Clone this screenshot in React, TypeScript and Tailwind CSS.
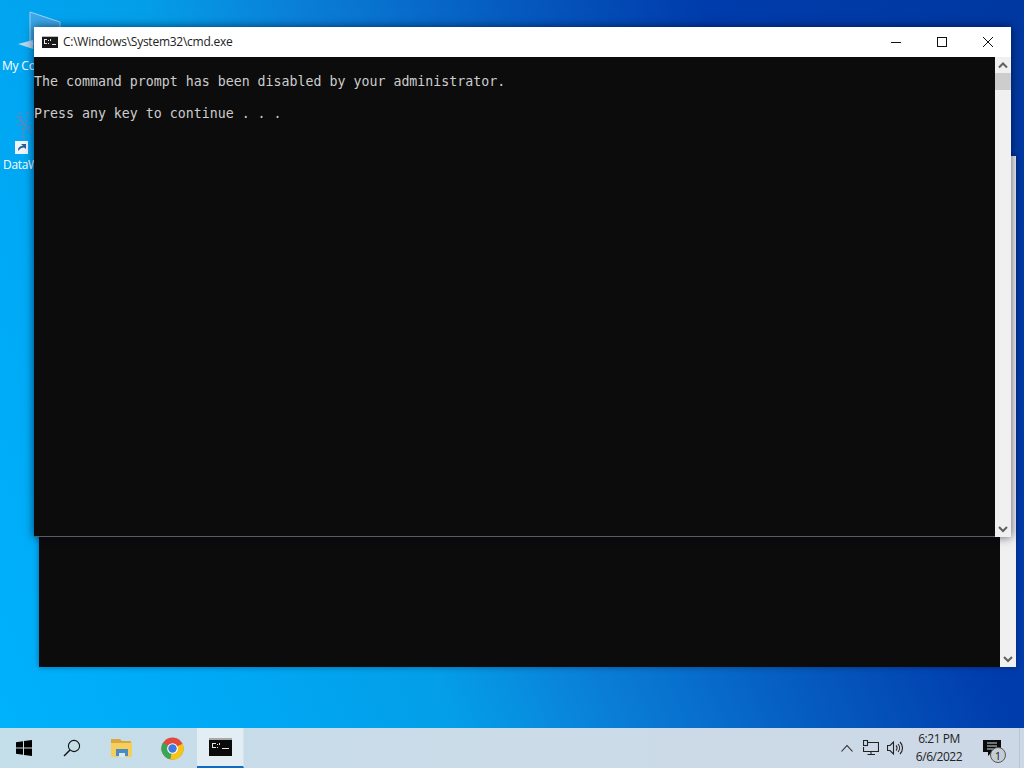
const mono = "font-['DejaVu_Sans_Mono',monospace] text-[13.28px] leading-[16px] text-[#cccccc] whitespace-pre";

function Chevron({ up }: { up?: boolean }) {
  return (
    <svg width="16" height="16" viewBox="0 0 16 16" fill="none" stroke="#606060" strokeWidth="2" className="shrink-0">
      <path d={up ? "M4 10.5 L8 6.5 L12 10.5" : "M4 6 L8 10 L12 6"} />
    </svg>
  );
}

function Desk() {
  return (
    <>
      <div className="absolute left-0 top-0 w-[70px] h-[80px]">
        <svg width="70" height="56" viewBox="0 0 70 56" className="absolute left-0 top-0">
          <path d="M30 12 L60 22 L60 44 L30 44 Z" fill="#3ba6e8" stroke="#9cd2f2" strokeWidth="1" />
          <path d="M18 44 L33 40 L33 49 Z" fill="#b4d8ee" />
        </svg>
        <span className="absolute left-[2px] top-[58px] text-white text-[12px] leading-[16px] whitespace-nowrap tracking-[-0.2px] font-['Open_Sans',sans-serif]">My Co</span>
      </div>
      <div className="absolute left-0 top-[106px] w-[70px] h-[70px]">
        <svg width="40" height="50" viewBox="0 0 40 50" className="absolute left-0 top-0">
          <path d="M20 6 L24 32 M28 6 L22 32 M17 18 L33 22 M17 10 L33 28" stroke="#b0708c" strokeWidth="2" strokeDasharray="2 2" opacity="0.55" />
          <rect x="15" y="35" width="13" height="13" fill="#eef4f8" />
          <path d="M18 45 C18 41 20 40 23 40 L21 38 L26 38 L26 43 L24 41.5 C22 41.5 20 42.5 18 45 Z" fill="#2a5f98" />
        </svg>
        <span className="absolute left-[3px] top-[51px] text-white text-[12px] leading-[16px] whitespace-nowrap tracking-[-0.3px] font-['Open_Sans',sans-serif]">DataW</span>
      </div>
    </>
  );
}

function BackWindow() {
  return (
    <div className="absolute left-[39px] top-[156px] w-[977px] h-[511px] flex shadow-[0_0_6px_rgba(0,0,40,0.4)]">
      <div className="flex-1 bg-[#0c0c0c]" />
      <div className="w-[16px] bg-[#f0f0f0] flex flex-col justify-end items-center">
        <Chevron />
      </div>
    </div>
  );
}

function FrontWindow() {
  return (
    <div className="absolute left-[34px] top-[27px] w-[977px] h-[510px] flex flex-col shadow-[0_0_9px_rgba(0,0,30,0.65)]">
      <div className="h-[30px] bg-white flex items-center shrink-0">
        <svg width="16" height="12" viewBox="0 0 16 12" className="ml-[8px] mr-[5px] shrink-0">
          <rect x="0" y="0" width="16" height="12" fill="#1a1a1a" />
          <rect x="0" y="0" width="16" height="1" fill="#bdbdbd" />
          <path d="M2 3 H5 V4 H3 V7 H5 V8 H2 Z M6 4 H7 V5 H6 Z M6 7 H7 V8 H6 Z M8 3 H9 V5 H8 Z M10 8 H14 V9 H10 Z" fill="#ececec" />
        </svg>
        <span className="text-[12px] leading-[16px] text-[#222] font-['Open_Sans',sans-serif] tracking-[-0.25px]">C:\Windows\System32\cmd.exe</span>
        <div className="ml-auto flex h-full items-center">
          <div className="w-[46px] h-full flex items-center justify-center">
            <svg width="12" height="12" viewBox="0 0 12 12" stroke="#111" fill="none"><path d="M1 6.5 H11" /></svg>
          </div>
          <div className="w-[46px] h-full flex items-center justify-center">
            <svg width="12" height="12" viewBox="0 0 12 12" stroke="#111" fill="none"><rect x="1.5" y="1.5" width="9" height="9" /></svg>
          </div>
          <div className="w-[46px] h-full flex items-center justify-center">
            <svg width="12" height="12" viewBox="0 0 12 12" stroke="#111" fill="none"><path d="M1 1 L11 11 M11 1 L1 11" /></svg>
          </div>
        </div>
      </div>
      <div className="flex-1 flex min-h-0">
        <div className={`flex-1 bg-[#0c0c0c] pt-[17px] border-b border-[#5c5c5c] ${mono}`}>
          {"The command prompt has been disabled by your administrator.\n\nPress any key to continue . . ."}
        </div>
        <div className="w-[16px] bg-[#f0f0f0] flex flex-col items-center">
          <Chevron up />
          <div className="w-[16px] h-[17px] bg-[#cdcdcd] shrink-0" />
          <div className="flex-1" />
          <Chevron />
        </div>
      </div>
    </div>
  );
}

function Taskbar() {
  return (
    <div className="absolute left-0 right-0 bottom-0 h-[40px] flex items-center bg-[linear-gradient(90deg,#c4deea_0%,#cbdbe8_50%,#cdd8e6_100%)]">
      <div className="w-[48px] h-full flex items-center justify-center">
        <svg width="16" height="16" viewBox="0 0 16 16" fill="#000">
          <path d="M0 2.3 L7 1.2 V7.4 H0 Z M8 1 L16 0 V7.4 H8 Z M0 8.5 H7 V14.8 L0 13.7 Z M8 8.5 H16 V16 L8 15 Z" />
        </svg>
      </div>
      <div className="w-[48px] h-full flex items-center justify-center">
        <svg width="18" height="18" viewBox="0 0 18 18" fill="none" stroke="#111" strokeWidth="1.1">
          <circle cx="11" cy="7" r="5.6" />
          <path d="M7 11 L1 17" strokeWidth="1.4" />
        </svg>
      </div>
      <div className="w-[52px] h-full flex items-center justify-center">
        <svg width="24" height="22" viewBox="0 0 24 22">
          <path d="M1 2 H10 L12 4 H21 V8 H1 Z" fill="#d9a73c" />
          <path d="M1 6 H22 V20 H1 Z" fill="#f6ce5c" />
          <path d="M6 12 H18 V19 H15 V16 H9 V19 H6 Z" fill="#4a8cc0" />
          <path d="M9 16 H15 V20 H9 Z" fill="#d9e6ee" />
        </svg>
      </div>
      <div className="w-[49px] h-full flex items-center justify-center">
        <svg width="23" height="23" viewBox="0 0 24 24">
          <circle cx="12" cy="12" r="11.5" fill="#e04a3a" />
          <path d="M12 12 L22.5 7 A11.5 11.5 0 0 1 9.5 23.2 Z" fill="#f5c518" />
          <path d="M12 12 L9.5 23.2 A11.5 11.5 0 0 1 2 6 Z" fill="#3aa655" />
          <circle cx="12" cy="12" r="5.6" fill="#fff" />
          <circle cx="12" cy="12" r="4.4" fill="#3f78e0" />
        </svg>
      </div>
      <div className="w-[47px] h-full flex items-center justify-center bg-[#e2edf4] border-b-2 border-[#0f6cc4] border-r border-r-[#d6e2ec]">
        <svg width="23" height="18" viewBox="0 0 23 18">
          <rect x="0" y="0" width="23" height="18" fill="#0b0b0b" />
          <rect x="0" y="0" width="23" height="2" fill="#a8a8a8" />
          <path d="M3 5 H7 V6 H4 V9 H7 V10 H3 Z M8 6 H9 V7 H8 Z M8 9 H9 V10 H8 Z M10 5 H11 V7 H10 Z M13 10 H20 V11 H13 Z" fill="#e4e4e4" />
        </svg>
      </div>
      <div className="ml-auto flex items-center h-full">
        <svg width="12" height="8" viewBox="0 0 12 8" fill="none" stroke="#222" strokeWidth="1.1" className="mr-[10px]">
          <path d="M0.5 7.5 L6 1.5 L11.5 7.5" />
        </svg>
        <svg width="16" height="16" viewBox="0 0 16 16" fill="none" stroke="#222" strokeWidth="1.1" className="mr-[8px]">
          <path d="M5 2.5 H15.5 V11.5 H0.5 V7" />
          <rect x="0.5" y="0.5" width="4" height="5" />
          <path d="M8 11.5 V14.5 M4.5 14.5 H12" />
        </svg>
        <svg width="16" height="14" viewBox="0 0 16 14" fill="none" stroke="#222" strokeWidth="1.1" className="mr-[3px]">
          <path d="M0.5 4.5 H3 L6.5 1 V13 L3 9.5 H0.5 Z" />
          <path d="M9 4.5 A3.5 3.5 0 0 1 9 9.5 M11 3 A6 6 0 0 1 11 11 M13 1 A8.5 8.5 0 0 1 13 13" />
        </svg>
        <div className="w-[66px] flex flex-col items-center text-[12px] leading-[18px] text-[#222] font-['Open_Sans',sans-serif] tracking-[-0.45px]">
          <span>6:21 PM</span>
          <span>6/6/2022</span>
        </div>
        <div className="relative w-[18px] h-full ml-[11px] pt-[12px]">
          <svg width="18" height="16" viewBox="0 0 18 16" className="block">
            <path d="M0 0 H18 V12 H9 L5 16 V12 H0 Z" fill="#0b0b0b" />
            <path d="M4 3 H14 M4 6 H14 M4 9 H11" stroke="#cfdde8" strokeWidth="1" />
          </svg>
          <div className="absolute left-[7px] top-[19px] w-[16px] h-[16px] rounded-full border border-[#555] bg-[#c4ccd4] flex items-center justify-center text-[11px] leading-none text-[#222] font-['Open_Sans',sans-serif]">1</div>
        </div>
        <div className="w-px h-full bg-[#b9c6d4] ml-[18px] mr-[4px]" />
      </div>
    </div>
  );
}

export default function App() {
  return (
    <div className="relative w-[1024px] h-[768px] overflow-hidden bg-[linear-gradient(66.5deg,#00b2fc_0%,#00a8f4_20%,#049ee8_35%,#0a80d8_46%,#0558be_63%,#003cac_76%,#0038a0_100%)]">
      <Desk />
      <BackWindow />
      <FrontWindow />
      <Taskbar />
    </div>
  );
}
